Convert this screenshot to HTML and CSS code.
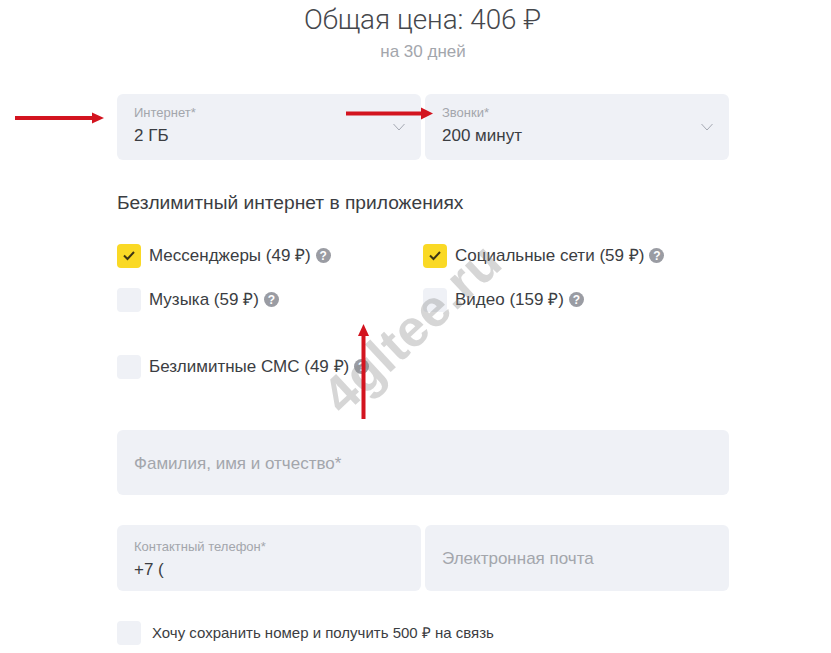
FILE: index.html
```html
<!DOCTYPE html>
<html lang="en">
<head>
    <meta charset="UTF-8">
    <meta name="viewport" content="width=device-width, initial-scale=1.0">
    <title>Тариф</title>
    <link rel="stylesheet" href="styles.css">
</head>
<body>
    <div class="page">
        <h1 class="price">Общая цена: 406 ₽</h1>
        <p class="period">на 30 дней</p>

        <div class="row">
            <div class="field field-select">
                <span class="field-label">Интернет*</span>
                <span class="field-value">2 ГБ</span>
                <svg class="chevron" width="12" height="8" viewBox="0 0 12 8"><path d="M.5 1l5.5 6 5.5-6" fill="none" stroke="#a4a8b2" stroke-width="1"/></svg>
            </div>
            <div class="field field-select">
                <span class="field-label">Звонки*</span>
                <span class="field-value">200 минут</span>
                <svg class="chevron" width="12" height="8" viewBox="0 0 12 8"><path d="M.5 1l5.5 6 5.5-6" fill="none" stroke="#a4a8b2" stroke-width="1"/></svg>
            </div>
        </div>

        <h2 class="section-title">Безлимитный интернет в приложениях</h2>

        <div class="options">
            <div class="option">
                <span class="check checked"><svg width="14" height="11" viewBox="0 0 14 11"><path d="M2 5.5l3.5 3.5L12 2" fill="none" stroke="#3d3415" stroke-width="2"/></svg></span>
                <span class="option-text">Мессенджеры (49 ₽)</span>
                <span class="help">?</span>
            </div>
            <div class="option">
                <span class="check checked"><svg width="14" height="11" viewBox="0 0 14 11"><path d="M2 5.5l3.5 3.5L12 2" fill="none" stroke="#3d3415" stroke-width="2"/></svg></span>
                <span class="option-text">Социальные сети (59 ₽)</span>
                <span class="help">?</span>
            </div>
            <div class="option">
                <span class="check"></span>
                <span class="option-text">Музыка (59 ₽)</span>
                <span class="help">?</span>
            </div>
            <div class="option">
                <span class="check"></span>
                <span class="option-text">Видео (159 ₽)</span>
                <span class="help">?</span>
            </div>
            <div class="option option-sms">
                <span class="check"></span>
                <span class="option-text">Безлимитные СМС (49 ₽)</span>
                <span class="help">?</span>
            </div>
        </div>

        <div class="field field-wide">
            <span class="field-hint">Фамилия, имя и отчество*</span>
        </div>

        <div class="row row-contacts">
            <div class="field field-phone">
                <span class="field-label">Контактный телефон*</span>
                <span class="field-value">+7 (</span>
            </div>
            <div class="field">
                <span class="field-hint">Электронная почта</span>
            </div>
        </div>

        <div class="keep-number">
            <span class="check"></span>
            <span class="option-text">Хочу сохранить номер и получить 500 ₽ на связь</span>
        </div>
    </div>

    <div class="watermark">4gltee.ru</div>

    <svg class="arrows" width="831" height="653" viewBox="0 0 831 653">
        <g fill="#d3141f">
            <rect x="15" y="116" width="78" height="4"/>
            <path d="M92 112.5l12 5.5-12 5.5z"/>
            <rect x="346" y="111.5" width="76" height="4"/>
            <path d="M421 107.5l12 6-12 6z"/>
            <rect x="361.5" y="334" width="4" height="85"/>
            <path d="M358 336l5.5-12 5.5 12z"/>
        </g>
    </svg>
</body>
</html>
```

FILE: styles.css
```css
body {
    font-family: "Liberation Sans", Arial, sans-serif;
    margin: 0;
    background-color: white;
    color: #3b3d42;
    overflow: hidden;
    height: 653px;
}
.page {
    width: 612px;
    margin-left: 117px;
}
.price {
    margin: 0;
    padding-top: 3px;
    margin-left: -1px;
    text-align: center;
    font-family: Roboto, sans-serif;
    font-size: 27.8px;
    line-height: 34px;
    font-weight: 300;
    color: #45474c;
}
.period {
    margin: 5px 0 0 0;
    text-align: center;
    font-size: 17px;
    line-height: 20px;
    color: #a3a6ac;
}
.row {
    display: grid;
    grid-template-columns: 304px 304px;
    gap: 4px;
    margin-top: 32px;
}
.field {
    position: relative;
    display: flex;
    flex-direction: column;
    justify-content: center;
    box-sizing: border-box;
    height: 66px;
    padding: 0 17px;
    background-color: #eff1f6;
    border-radius: 6px;
}
.field-select {
    padding-bottom: 3px;
}
.field-phone {
    padding-top: 4px;
}
.field-wide {
    height: 65px;
    margin-top: 51px;
}
.row-contacts {
    margin-top: 30px;
}
.field-label {
    font-size: 13px;
    line-height: 16px;
    color: #a3a6ac;
}
.field-value {
    margin-top: 4px;
    font-size: 17px;
    line-height: 22px;
    color: #3b3d42;
}
.field-hint {
    padding-top: 2px;
    font-size: 17px;
    color: #a3a6ac;
}
.chevron {
    position: absolute;
    right: 16px;
    top: 29px;
}
.section-title {
    margin: 31px 0 0 0;
    font-size: 19.2px;
    line-height: 24px;
    font-weight: 400;
    color: #3b3d42;
}
.options {
    display: grid;
    grid-template-columns: 306px 306px;
    grid-template-rows: 24px 24px 47px;
    row-gap: 20px;
    align-items: end;
    margin-top: 29px;
    font-size: 17px;
}
.option {
    display: flex;
    align-items: center;
}
.option-sms {
    grid-column: 1 / 3;
}
.option-text {
    padding-bottom: 2px;
}
.check {
    display: flex;
    align-items: center;
    justify-content: center;
    flex: none;
    width: 24px;
    height: 24px;
    margin-right: 8px;
    background-color: #eff1f6;
    border-radius: 4px;
}
.checked {
    background-color: #fad925;
}
.help {
    display: flex;
    align-items: center;
    justify-content: center;
    width: 15px;
    height: 15px;
    margin-left: 5px;
    border-radius: 50%;
    background-color: #9a9ca3;
    color: white;
    font-size: 12px;
    font-weight: 700;
}
.keep-number {
    display: flex;
    align-items: center;
    margin-top: 30px;
    font-size: 15px;
}
.keep-number .check {
    margin-right: 11px;
}
.watermark {
    position: absolute;
    left: 301px;
    top: 298px;
    font-size: 52px;
    font-weight: 700;
    letter-spacing: 0.5px;
    color: #8b8b8b;
    opacity: 0.35;
    transform: rotate(-43deg);
}
.arrows {
    position: absolute;
    left: 0;
    top: 0;
}
```
